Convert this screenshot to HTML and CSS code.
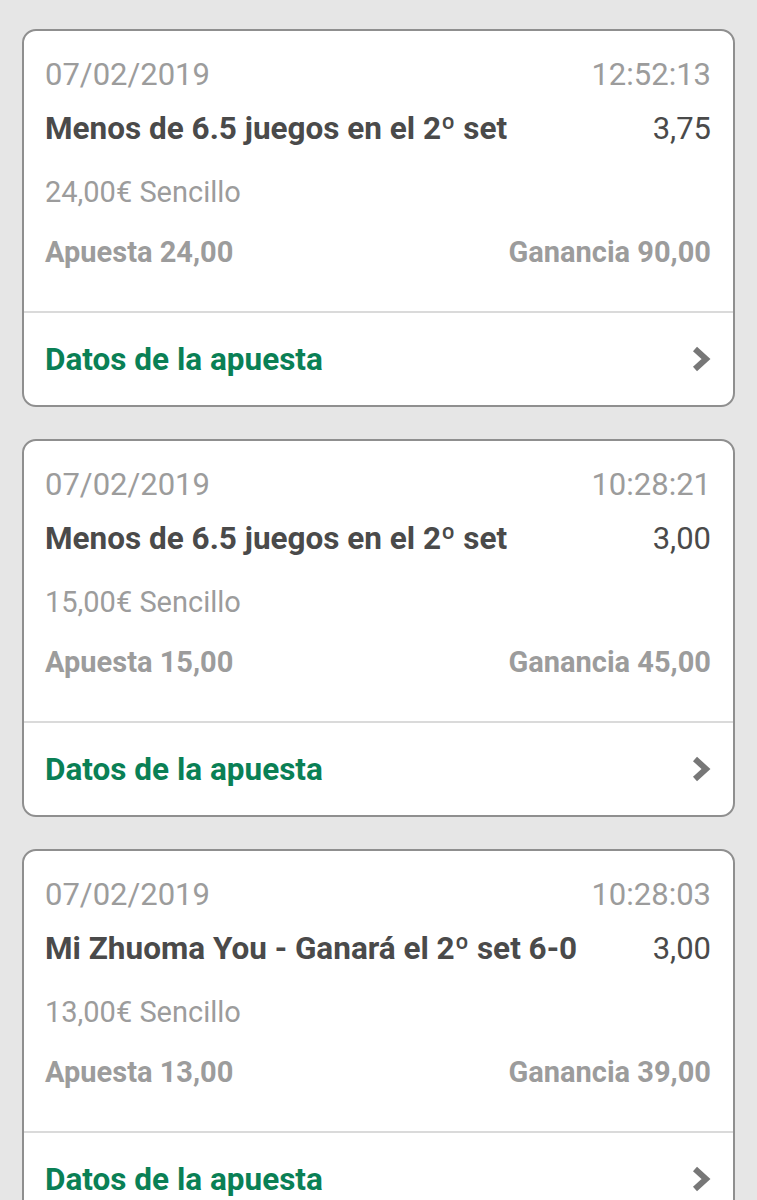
FILE: index.html
```html
<!DOCTYPE html>
<html lang="es">
<head>
    <meta charset="UTF-8">
    <meta name="viewport" content="width=device-width, initial-scale=1.0">
    <title>Mis apuestas</title>
    <link rel="stylesheet" href="styles.css">
</head>
<body>
    <div class="list">
        <div class="bet">
            <div class="bet-body">
                <div class="row meta">
                    <span>07/02/2019</span>
                    <span>12:52:13</span>
                </div>
                <div class="row title">
                    <span>Menos de 6.5 juegos en el 2º set</span>
                    <span class="odds">3,75</span>
                </div>
                <div class="row type">24,00€ Sencillo</div>
                <div class="row amounts">
                    <span>Apuesta 24,00</span>
                    <span>Ganancia 90,00</span>
                </div>
            </div>
            <div class="bet-footer">
                <span>Datos de la apuesta</span>
                <svg class="chevron" viewBox="0 0 20 26"><path d="M4 3 L15 13 L4 23" /></svg>
            </div>
        </div>

        <div class="bet">
            <div class="bet-body">
                <div class="row meta">
                    <span>07/02/2019</span>
                    <span>10:28:21</span>
                </div>
                <div class="row title">
                    <span>Menos de 6.5 juegos en el 2º set</span>
                    <span class="odds">3,00</span>
                </div>
                <div class="row type">15,00€ Sencillo</div>
                <div class="row amounts">
                    <span>Apuesta 15,00</span>
                    <span>Ganancia 45,00</span>
                </div>
            </div>
            <div class="bet-footer">
                <span>Datos de la apuesta</span>
                <svg class="chevron" viewBox="0 0 20 26"><path d="M4 3 L15 13 L4 23" /></svg>
            </div>
        </div>

        <div class="bet">
            <div class="bet-body">
                <div class="row meta">
                    <span>07/02/2019</span>
                    <span>10:28:03</span>
                </div>
                <div class="row title">
                    <span>Mi Zhuoma You - Ganará el 2º set 6-0</span>
                    <span class="odds">3,00</span>
                </div>
                <div class="row type">13,00€ Sencillo</div>
                <div class="row amounts">
                    <span>Apuesta 13,00</span>
                    <span>Ganancia 39,00</span>
                </div>
            </div>
            <div class="bet-footer">
                <span>Datos de la apuesta</span>
                <svg class="chevron" viewBox="0 0 20 26"><path d="M4 3 L15 13 L4 23" /></svg>
            </div>
        </div>
    </div>
</body>
</html>
```

FILE: styles.css
```css
body {
    margin: 0;
    background: #e6e6e6;
    font-family: Roboto, 'Noto Sans', sans-serif;
}

.list {
    display: flex;
    flex-direction: column;
    gap: 32px;
    padding: 29px 22px 40px 22px;
}

.bet {
    background: #fff;
    border: 2px solid #8f8f8f;
    border-radius: 14px;
}

.bet-body {
    padding: 26px 22px 41px 21px;
    border-bottom: 2px solid #dadada;
}

.row {
    display: flex;
    justify-content: space-between;
    align-items: center;
    font-size: 31px;
    line-height: 36px;
}

.meta {
    color: #9c9c9c;
}

.title {
    margin-top: 18px;
    color: #4a4a4a;
    font-size: 31.5px;
    font-weight: bold;
}

.title .odds {
    font-size: 31px;
    font-weight: normal;
}

.type {
    margin-top: 27px;
    color: #9c9c9c;
    font-size: 29px;
}

.amounts {
    margin-top: 24px;
    color: #9c9c9c;
    font-size: 29px;
    font-weight: bold;
}

.bet-footer {
    display: flex;
    justify-content: space-between;
    align-items: center;
    height: 92px;
    padding: 0 22px 0 21px;
    color: #0a8055;
    font-size: 31.5px;
    font-weight: bold;
}

.chevron {
    width: 20px;
    height: 26px;
}

.chevron path {
    fill: none;
    stroke: #777;
    stroke-width: 6;
}
```
